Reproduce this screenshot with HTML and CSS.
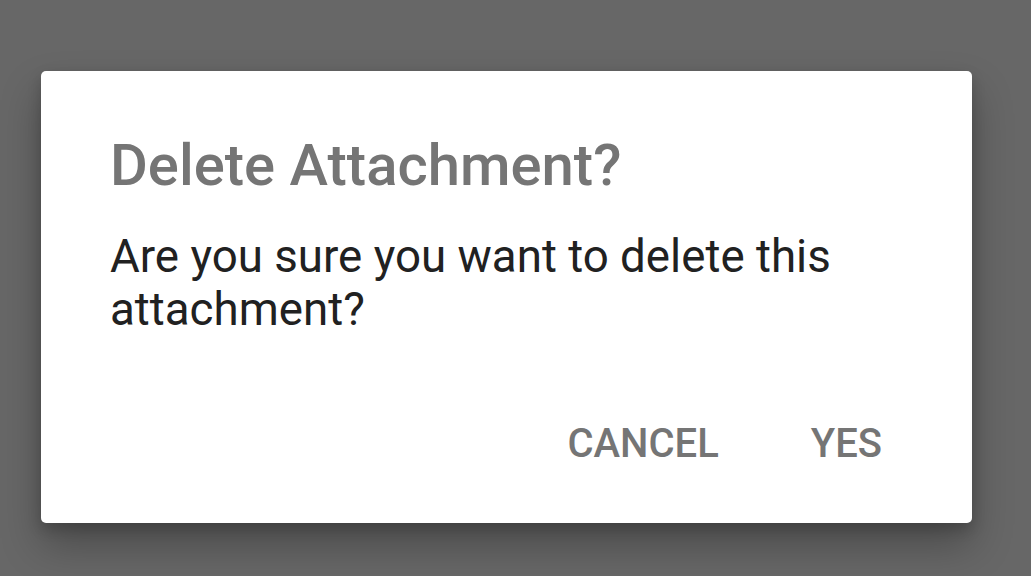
FILE: index.html
```html
<!DOCTYPE html>
<html lang="en">
<head>
    <meta charset="UTF-8">
    <meta name="viewport" content="width=device-width, initial-scale=1.0">
    <title>Delete Attachment</title>
    <link rel="stylesheet" href="styles.css">
</head>
<body>
    <div class="overlay">
        <div class="dialog">
            <h2 class="dialog-title">Delete Attachment?</h2>
            <p class="dialog-message">Are you sure you want to delete this attachment?</p>
            <div class="dialog-actions">
                <button class="dialog-btn">CANCEL</button>
                <button class="dialog-btn">YES</button>
            </div>
        </div>
    </div>
</body>
</html>
```

FILE: styles.css
```css
body {
    margin: 0;
    padding: 0;
    font-family: Roboto, 'Liberation Sans', sans-serif;
    background-color: #676767;
}
.overlay {
    height: 576px;
    padding: 71px 0 0 41px;
    box-sizing: border-box;
    overflow: hidden;
}
.dialog {
    width: 931px;
    height: 452px;
    background: #fff;
    border-radius: 5px;
    box-shadow: 0 22px 40px rgba(0, 0, 0, 0.28), 0 6px 14px rgba(0, 0, 0, 0.18);
    box-sizing: border-box;
    padding: 62px 66px 0 69px;
    display: flex;
    flex-direction: column;
}
.dialog-title {
    margin: 0;
    font-size: 58px;
    font-weight: 500;
    line-height: 64px;
    color: #757575;
}
.dialog-message {
    margin: 33px 0 0 0;
    font-size: 45.7px;
    line-height: 53px;
    color: #212121;
}
.dialog-actions {
    margin-top: auto;
    margin-right: 2px;
    padding-bottom: 30px;
    display: flex;
    justify-content: flex-end;
    gap: 48px;
}
.dialog-btn {
    font-family: Roboto, 'Liberation Sans', sans-serif;
    font-size: 40px;
    font-weight: 500;
    color: #757575;
    background: none;
    border: none;
    padding: 0 22px;
    height: 99px;
    cursor: pointer;
}
```
